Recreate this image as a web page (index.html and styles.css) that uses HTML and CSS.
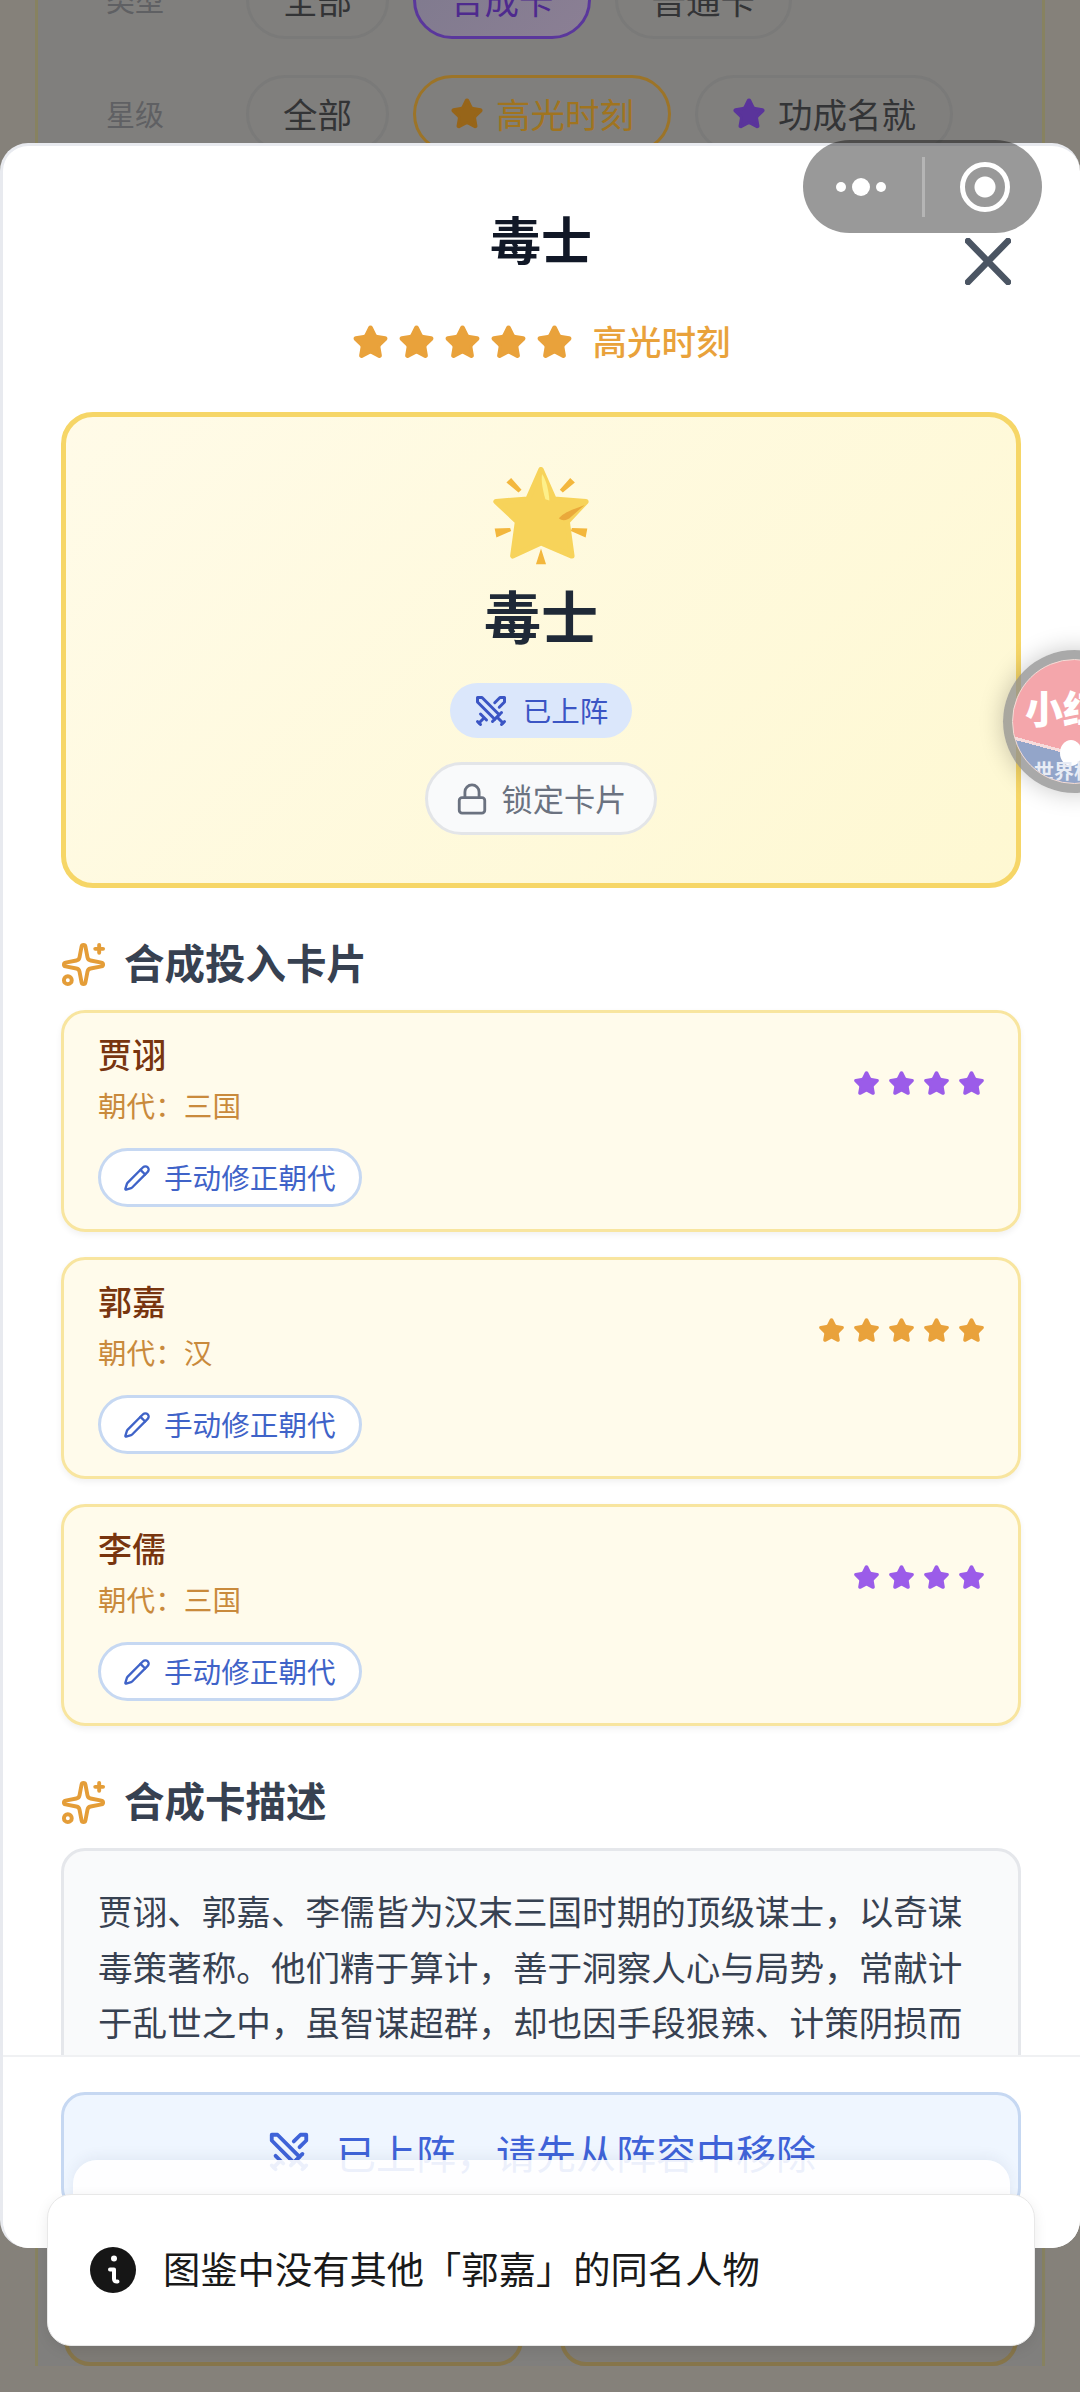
FILE: index.html
```html
<!DOCTYPE html>
<html lang="zh-CN">
<head>
  <meta charset="UTF-8">
  <meta name="viewport" content="width=device-width, initial-scale=1.0">
  <title>毒士</title>
  <link rel="stylesheet" href="styles.css">
</head>
<body>
  <svg class="defs" width="0" height="0" aria-hidden="true">
    <symbol id="i-star" viewBox="0 0 24 24"><path d="M11.525 2.295a.53.53 0 0 1 .95 0l2.31 4.679a2.123 2.123 0 0 0 1.595 1.16l5.166.756a.53.53 0 0 1 .294.904l-3.736 3.638a2.123 2.123 0 0 0-.611 1.878l.882 5.14a.53.53 0 0 1-.771.56l-4.618-2.428a2.122 2.122 0 0 0-1.973 0L6.396 21.01a.53.53 0 0 1-.77-.56l.881-5.139a2.122 2.122 0 0 0-.611-1.879L2.16 9.795a.53.53 0 0 1 .294-.906l5.165-.755a2.122 2.122 0 0 0 1.597-1.16z" fill="currentColor" stroke="currentColor" stroke-width="2" stroke-linejoin="round"/></symbol>
    <symbol id="i-swords" viewBox="0 0 24 24" fill="none" stroke="currentColor" stroke-width="2" stroke-linecap="round" stroke-linejoin="round"><polyline points="14.5 17.5 3 6 3 3 6 3 17.5 14.5"/><line x1="13" x2="19" y1="19" y2="13"/><line x1="16" x2="20" y1="16" y2="20"/><line x1="19" x2="21" y1="21" y2="19"/><polyline points="14.5 6.5 18 3 21 3 21 6 17.5 9.5"/><line x1="5" x2="9" y1="14" y2="18"/><line x1="7" x2="4" y1="17" y2="20"/><line x1="3" x2="5" y1="19" y2="21"/></symbol>
    <symbol id="i-lock" viewBox="0 0 24 24" fill="none" stroke="currentColor" stroke-width="2" stroke-linecap="round" stroke-linejoin="round"><rect width="18" height="11" x="3" y="11" rx="2"/><path d="M7 11V7a5 5 0 0 1 10 0v4"/></symbol>
    <symbol id="i-spark" viewBox="0 0 24 24" fill="none" stroke="currentColor" stroke-width="2" stroke-linecap="round" stroke-linejoin="round"><path d="M11.017 2.814a1 1 0 0 1 1.966 0l1.051 5.558a2 2 0 0 0 1.594 1.594l5.558 1.051a1 1 0 0 1 0 1.966l-5.558 1.051a2 2 0 0 0-1.594 1.594l-1.051 5.558a1 1 0 0 1-1.966 0l-1.051-5.558a2 2 0 0 0-1.594-1.594l-5.558-1.051a1 1 0 0 1 0-1.966l5.558-1.051a2 2 0 0 0 1.594-1.594z"/><path d="M20 2v4"/><path d="M22 4h-4"/><circle cx="4" cy="20" r="2"/></symbol>
    <symbol id="i-pencil" viewBox="0 0 24 24" fill="none" stroke="currentColor" stroke-width="2" stroke-linecap="round" stroke-linejoin="round"><path d="M21.174 6.812a1 1 0 0 0-3.986-3.987L3.842 16.174a2 2 0 0 0-.5.83l-1.321 4.352a.5.5 0 0 0 .623.622l4.353-1.32a2 2 0 0 0 .83-.497z"/><path d="m15 5 4 4"/></symbol>
  </svg>

  <!-- dimmed page behind the sheet -->
  <div class="page">
    <div class="panel">
      <div class="filter-row">
        <span class="filter-label">类型</span>
        <span class="chip">全部</span>
        <span class="chip chip-purple">合成卡</span>
        <span class="chip">普通卡</span>
      </div>
      <div class="filter-row">
        <span class="filter-label">星级</span>
        <span class="chip">全部</span>
        <span class="chip chip-gold"><svg class="chip-star"><use href="#i-star"/></svg>高光时刻</span>
        <span class="chip"><svg class="chip-star star-dim-purple"><use href="#i-star"/></svg>功成名就</span>
      </div>
      <div class="page-cards">
        <div class="page-card"></div>
        <div class="page-card"></div>
      </div>
    </div>
  </div>

  <div class="sheet">
    <div class="sheet-body">
      <h1 class="sheet-title">毒士</h1>
      <div class="rarity">
        <svg class="rarity-star"><use href="#i-star"/></svg>
        <svg class="rarity-star"><use href="#i-star"/></svg>
        <svg class="rarity-star"><use href="#i-star"/></svg>
        <svg class="rarity-star"><use href="#i-star"/></svg>
        <svg class="rarity-star"><use href="#i-star"/></svg>
        <span class="rarity-text">高光时刻</span>
      </div>

      <div class="hero">
        <svg class="hero-emoji" viewBox="283 82 284 292">
          <path d="M425 90L464 178 559 185 503 245 517 347 425 308 341 347 355 245 291 185 386 178z" fill="#f7d35a" stroke="#f7d35a" stroke-width="16" stroke-linejoin="round"/>
          <path d="M428 103C440 120 448 150 450 182L438 178C430 150 425 125 428 103z" fill="#fdf08a"/>
          <path d="M555 195C530 205 495 215 478 235 490 245 505 240 515 230z" fill="#eaa93b"/>
          <path d="M336 115L367 150 358 158 322 128zM512 115L481 150 490 158 526 128zM287 265L333 264 336 273 292 292zM563 265L517 264 514 273 558 292zM425 325L440 372H410z" fill="#f3b73d"/>
        </svg>
        <div class="hero-name">毒士</div>
        <div class="badge"><svg class="badge-icon"><use href="#i-swords"/></svg>已上阵</div>
        <div class="lock-btn"><svg class="lock-icon"><use href="#i-lock"/></svg>锁定卡片</div>
      </div>

      <h2 class="section-head"><svg class="section-icon"><use href="#i-spark"/></svg>合成投入卡片</h2>
      <div class="source-list">
        <div class="source-card">
          <div class="source-top">
            <div>
              <div class="source-name">贾诩</div>
              <div class="source-dynasty">朝代：三国</div>
            </div>
            <div class="source-stars purple">
              <svg class="source-star"><use href="#i-star"/></svg>
              <svg class="source-star"><use href="#i-star"/></svg>
              <svg class="source-star"><use href="#i-star"/></svg>
              <svg class="source-star"><use href="#i-star"/></svg>
            </div>
          </div>
          <div class="fix-btn"><svg class="fix-icon"><use href="#i-pencil"/></svg>手动修正朝代</div>
        </div>
        <div class="source-card">
          <div class="source-top">
            <div>
              <div class="source-name">郭嘉</div>
              <div class="source-dynasty">朝代：汉</div>
            </div>
            <div class="source-stars gold">
              <svg class="source-star"><use href="#i-star"/></svg>
              <svg class="source-star"><use href="#i-star"/></svg>
              <svg class="source-star"><use href="#i-star"/></svg>
              <svg class="source-star"><use href="#i-star"/></svg>
              <svg class="source-star"><use href="#i-star"/></svg>
            </div>
          </div>
          <div class="fix-btn"><svg class="fix-icon"><use href="#i-pencil"/></svg>手动修正朝代</div>
        </div>
        <div class="source-card">
          <div class="source-top">
            <div>
              <div class="source-name">李儒</div>
              <div class="source-dynasty">朝代：三国</div>
            </div>
            <div class="source-stars purple">
              <svg class="source-star"><use href="#i-star"/></svg>
              <svg class="source-star"><use href="#i-star"/></svg>
              <svg class="source-star"><use href="#i-star"/></svg>
              <svg class="source-star"><use href="#i-star"/></svg>
            </div>
          </div>
          <div class="fix-btn"><svg class="fix-icon"><use href="#i-pencil"/></svg>手动修正朝代</div>
        </div>
      </div>

      <h2 class="section-head"><svg class="section-icon"><use href="#i-spark"/></svg>合成卡描述</h2>
      <div class="desc">贾诩、郭嘉、李儒皆为汉末三国时期的顶级谋士，以奇谋毒策著称。他们精于算计，善于洞察人心与局势，常献计于乱世之中，虽智谋超群，却也因手段狠辣、计策阴损而为世人所忌惮。</div>
    </div>

    <div class="sheet-foot">
      <div class="remove-btn"><svg class="remove-icon"><use href="#i-swords"/></svg>已上阵，请先从阵容中移除</div>
    </div>
  </div>

  <svg class="close-icon" viewBox="0 0 46 47"><path d="M3 3l40 41M43 3L3 44"/></svg>

  <div class="capsule">
    <div class="capsule-dots"><i></i><i class="dot-mid"></i><i></i></div>
    <div class="capsule-line"></div>
    <div class="capsule-target"><i></i></div>
  </div>

  <div class="float-ball">
    <div class="ball-inner">
      <span class="ball-title">小红</span>
      <span class="ball-cloud"></span>
      <span class="ball-sub">世界杯</span>
    </div>
  </div>

  <div class="toast toast-back"></div>
  <div class="toast toast-front">
    <svg class="toast-icon" viewBox="0 0 46 46"><circle cx="23" cy="23" r="23" fill="#161616"/><circle cx="24" cy="11.500" r="3" fill="#fff"/><path d="M20 22.500h4v9.500q0 3 3.500 2.500" fill="none" stroke="#fff" stroke-width="4" stroke-linecap="round" stroke-linejoin="round"/></svg>
    <span>图鉴中没有其他「郭嘉」的同名人物</span>
  </div>
</body>
</html>
```

FILE: styles.css
```css
* { box-sizing: border-box; }
html, body { margin: 0; padding: 0; }
body {
  width: 1080px;
  height: 2392px;
  overflow: hidden;
  position: relative;
  background: #85817a;
  font-family: "Noto Sans CJK SC", "Noto Sans", sans-serif;
}
.defs { position: absolute; }

/* page under the mask */
.page { height: 2392px; padding: 0 35px; }
.panel {
  height: 2405px;
  margin-top: -39px;
  padding: 0 0 0 68px;
  display: flex;
  flex-direction: column;
  background: #807f7d;
  border: 3px solid #878260;
  border-top: 0;
  border-bottom: 0;
}
.filter-row { display: flex; align-items: center; gap: 24px; height: 78px; margin-bottom: 36px; flex: none; }
.filter-label { width: 116px; padding-bottom: 3px; font-size: 29px; color: #5f6063; }
.chip {
  height: 78px;
  padding: 0 34px 3px;
  display: flex;
  align-items: center;
  gap: 12px;
  border: 3px solid #7a7a79;
  border-radius: 39px;
  font-size: 34.5px;
  color: #333436;
}
.chip-purple { color: #4e2a8e; border-color: #5a379c; background: linear-gradient(135deg, #7f7a8e, #8b7f94); }
.chip-gold { color: #a0741f; border-color: #9c7428; }
.chip-star { width: 34px; height: 34px; margin-top: 3px; color: #976519; }
.star-dim-purple { color: #5a349b; }
.page-cards { margin-top: auto; margin-left: -42px; margin-right: 24px; display: flex; gap: 37px; }
.page-card {
  flex: 1;
  height: 200px;
  border: 4px solid #86754a;
  border-radius: 26px;
  background: #7e7b76;
}

/* sheet */
.sheet {
  position: absolute;
  left: 0;
  top: 143px;
  width: 1080px;
  height: 2105px;
  display: flex;
  flex-direction: column;
  background: #fff;
  border-radius: 28px;
  border: 3px solid #e8eaef;
  border-bottom: 0;
  border-right: 0;
  overflow: hidden;
}
.sheet-body { flex: 1; overflow: hidden; padding: 57px 59px 0 58px; min-height: 0; }
.sheet-title { margin: 0; text-align: center; font-size: 51px; line-height: 70px; font-weight: 700; color: #111827; }
.rarity { margin-top: 49px; height: 40px; display: flex; justify-content: center; align-items: center; gap: 9px; }
.rarity-star { width: 37px; height: 37px; color: #e9a23b; }
.rarity-text { margin: -5px 0 0 11px; font-size: 34.5px; line-height: 40px; font-weight: 500; color: #e9a23b; }

.hero {
  margin-top: 50px;
  height: 476px;
  padding-top: 50px;
  display: flex;
  flex-direction: column;
  align-items: center;
  border: 5px solid #f6d667;
  border-radius: 32px;
  background: linear-gradient(135deg, #fffbe8, #fef8d2);
}
.hero-emoji { width: 96px; height: 98px; display: block; }
.hero-name { margin-top: 14px; font-size: 57px; line-height: 70px; font-weight: 700; color: #1f2937; }
.badge {
  margin-top: 34px;
  height: 55px;
  padding: 0 24px 3px 23px;
  display: flex;
  align-items: center;
  gap: 14px;
  background: #dbe7fb;
  border-radius: 28px;
  font-size: 28.5px;
  color: #3b55c4;
}
.badge-icon { width: 36px; height: 36px; margin-top: 3px; }
.lock-btn {
  margin-top: 24px;
  height: 73px;
  padding: 0 28px 3px 27px;
  display: flex;
  align-items: center;
  gap: 13px;
  background: #f9fafb;
  border: 3px solid #e3e5e8;
  border-radius: 37px;
  font-size: 31.2px;
  color: #6b7280;
}
.lock-icon { width: 34px; height: 34px; margin-top: 3px; }

.section-head {
  margin: 46px 0 15px;
  padding-bottom: 5px;
  display: flex;
  align-items: center;
  gap: 17px;
  font-size: 40.5px;
  line-height: 56px;
  font-weight: 700;
  color: #374151;
}
.section-icon { width: 47px; height: 47px; margin: 5px 0 0 -1px; color: #e49d38; }

.source-list { display: flex; flex-direction: column; gap: 25px; }
.source-card {
  height: 222px;
  padding: 16px 33px 0 34px;
  background: #fffbeb;
  border: 3px solid #f8e59f;
  border-radius: 24px;
  box-shadow: 0 3px 6px rgba(0, 0, 0, .06);
}
.source-top { display: flex; justify-content: space-between; align-items: center; }
.source-name { font-size: 34px; line-height: 50px; font-weight: 500; color: #78350f; }
.source-dynasty { margin-top: 6px; font-size: 28.6px; line-height: 40px; color: #c98a3c; }
.source-stars { display: flex; gap: 8px; margin-top: 12px; }
.purple { color: #9b5ce9; }
.gold { color: #e9a23b; }
.source-star { width: 27px; height: 27px; }
.fix-btn {
  width: fit-content;
  margin-top: 23px;
  height: 59px;
  padding: 0 23px 3px 22px;
  display: flex;
  align-items: center;
  gap: 13px;
  background: #fff;
  border: 3px solid #c6d8f2;
  border-radius: 30px;
  font-size: 28.6px;
  color: #3f63c8;
}
.fix-icon { width: 28px; height: 28px; margin-top: 3px; }

.desc {
  padding: 32px 34px 40px;
  background: #f9fafb;
  border: 3px solid #e5e7eb;
  border-radius: 24px;
  font-size: 34.6px;
  line-height: 55.5px;
  color: #374151;
}

.sheet-foot { height: 193px; flex: none; padding: 35px 59px 0 58px; background: #fff; border-top: 2px solid #f0f1f3; }
.remove-btn {
  height: 120px;
  display: flex;
  justify-content: center;
  align-items: center;
  gap: 24px;
  background: #eff6ff;
  border: 3px solid #c6d8f2;
  border-radius: 24px;
  font-size: 40px;
  color: #3f63d8;
}
.remove-icon { width: 46px; height: 46px; }

/* floating bits over the sheet */
.close-icon {
  position: absolute;
  left: 965px;
  top: 238px;
  width: 46px;
  height: 47px;
  fill: none;
  stroke: #4b5563;
  stroke-width: 6.5;
  stroke-linecap: round;
}
.capsule {
  position: absolute;
  left: 803px;
  top: 140px;
  width: 239px;
  height: 93px;
  display: flex;
  align-items: center;
  background: rgba(0, 0, 0, .4);
  border-radius: 47px;
}
.capsule-dots { width: 119px; padding-right: 3px; display: flex; justify-content: center; align-items: center; gap: 6px; }
.capsule-dots i { width: 10px; height: 10px; background: #fff; border-radius: 50%; }
.capsule-dots .dot-mid { width: 18px; height: 18px; }
.capsule-line { width: 3px; height: 60px; background: rgba(255, 255, 255, .28); }
.capsule-target { flex: 1; display: flex; justify-content: center; padding-left: 3px; }
.capsule-target i {
  width: 50px;
  height: 50px;
  border: 5px solid #fff;
  border-radius: 50%;
  background: radial-gradient(circle, #fff 0 10px, transparent 11px);
}

.float-ball {
  position: absolute;
  left: 1003px;
  top: 650px;
  width: 143px;
  height: 143px;
  padding: 9px;
  border-radius: 50%;
  background: rgba(140, 140, 140, .75);
  box-shadow: 0 0 24px rgba(0, 0, 0, .22);
}
.ball-inner {
  position: relative;
  width: 100%;
  height: 100%;
  overflow: hidden;
  border-radius: 50%;
  border: 1px solid #f4dcd6;
  background: linear-gradient(195deg, #f4a6ab 0 70%, #f7dcdc 70% 72%, #93a5c9 72%);
}
.ball-title { position: absolute; left: 12px; top: 22px; white-space: nowrap; font-size: 38px; line-height: 50px; font-weight: 900; color: #fff; }
.ball-cloud { position: absolute; left: 47px; top: 80px; width: 22px; height: 26px; background: #fff; border-radius: 50%; }
.ball-sub { position: absolute; left: 21px; top: 99px; white-space: nowrap; font-size: 20px; line-height: 24px; font-weight: 700; color: #e8ecf5; }

.toast { position: absolute; border-radius: 24px; }
.toast-back {
  left: 73px;
  top: 2160px;
  width: 937px;
  height: 120px;
  background: rgba(255, 255, 255, .9);
  box-shadow: 0 -3px 14px rgba(40, 60, 100, .07);
}
.toast-front {
  left: 47px;
  top: 2194px;
  width: 988px;
  height: 152px;
  padding: 0 0 4px 42px;
  display: flex;
  align-items: center;
  gap: 27px;
  background: #fff;
  border: 1px solid #e8e8e8;
  box-shadow: 0 4px 14px rgba(0, 0, 0, .08);
  font-size: 37.3px;
  color: #191919;
}
.toast-icon { width: 46px; height: 46px; flex: none; margin-top: 4px; }
```
